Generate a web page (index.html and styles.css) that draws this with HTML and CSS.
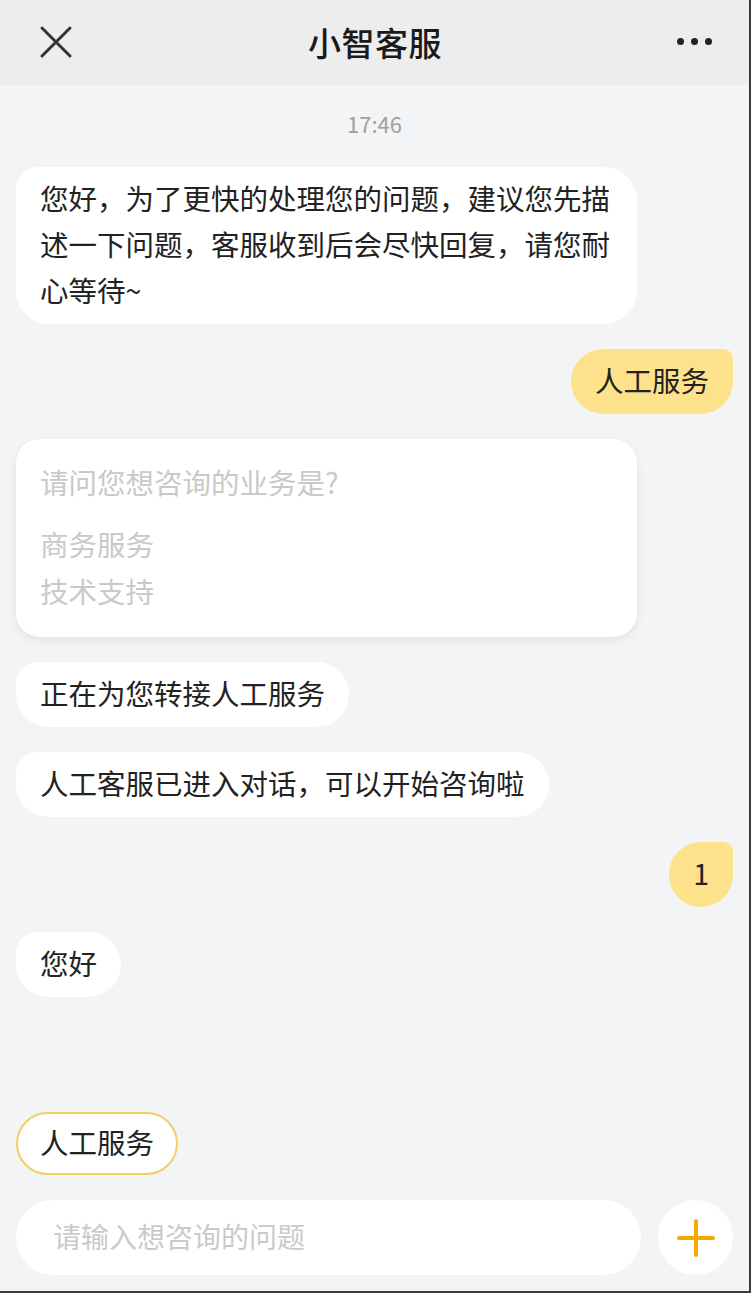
FILE: index.html
```html
<!DOCTYPE html>
<html lang="zh-CN">
<head>
  <meta charset="UTF-8" />
  <meta name="viewport" content="width=device-width, initial-scale=1.0" />
  <title>小智客服</title>
  <link rel="stylesheet" href="styles.css">
</head>
<body>

  <div class="app">
    <header class="top-bar">
      <button class="icon-btn" aria-label="关闭">
        <svg width="34" height="34" viewBox="0 0 34 34">
          <path d="M3 3 L31 31 M31 3 L3 31" stroke="#333" stroke-width="3" stroke-linecap="round" fill="none"/>
        </svg>
      </button>
      <h1>小智客服</h1>
      <button class="icon-btn more" aria-label="更多">
        <span></span><span></span><span></span>
      </button>
    </header>

    <main class="chat">
      <div class="time">17:46</div>

      <div class="msg left">您好，为了更快的处理您的问题，建议您先描述一下问题，客服收到后会尽快回复，请您耐心等待~</div>
      <div class="msg right">人工服务</div>

      <div class="menu-card">
        <div class="menu-title">请问您想咨询的业务是?</div>
        <div class="menu-item first">商务服务</div>
        <div class="menu-item">技术支持</div>
      </div>

      <div class="msg left">正在为您转接人工服务</div>
      <div class="msg left">人工客服已进入对话，可以开始咨询啦</div>
      <div class="msg right">1</div>
      <div class="msg left">您好</div>
    </main>

    <footer class="bottom">
      <button class="chip">人工服务</button>
      <div class="input-row">
        <input type="text" placeholder="请输入想咨询的问题" />
        <button class="plus" aria-label="更多功能">
          <svg width="38" height="38" viewBox="0 0 38 38">
            <path d="M19 2 V36 M2 19 H36" stroke="#f5a900" stroke-width="4" stroke-linecap="round" fill="none"/>
          </svg>
        </button>
      </div>
    </footer>
  </div>

</body>
</html>
```

FILE: styles.css
```css
* {
  box-sizing: border-box;
}

body {
  margin: 0;
  font-family: "Noto Sans CJK SC", "Noto Sans", sans-serif;
  color: #222;
  background: #f3f4f6;
}

.app {
  width: 751px;
  height: 1293px;
  display: flex;
  flex-direction: column;
  background: #f3f4f6;
  border-right: 2px solid #3a3a3a;
  border-bottom: 2px solid #3a3a3a;
  overflow: hidden;
}

.top-bar {
  height: 85px;
  flex-shrink: 0;
  background: #ededed;
  display: flex;
  align-items: center;
  justify-content: space-between;
  padding: 0 33px 2px 34px;
}

.top-bar h1 {
  margin: 0;
  font-size: 33px;
  font-weight: 500;
  color: #1a1a1a;
  letter-spacing: 0.5px;
}

.icon-btn {
  background: none;
  border: none;
  padding: 0;
  width: 44px;
  height: 44px;
  display: flex;
  align-items: center;
  justify-content: center;
}

.icon-btn.more {
  gap: 7px;
  width: 44px;
}

.icon-btn.more span {
  width: 7px;
  height: 7px;
  border-radius: 50%;
  background: #222;
}

.chat {
  flex: 1;
  display: flex;
  flex-direction: column;
  align-items: flex-start;
  gap: 25px;
  padding: 18px 16px 0 16px;
}

.time {
  align-self: center;
  font-size: 22px;
  line-height: 40px;
  color: #a0a0a0;
  margin-bottom: -1px;
}

.msg {
  max-width: 621px;
  padding: 8px 24px 11px;
  font-size: 28.5px;
  line-height: 46px;
  border-radius: 22px 33px 33px 33px;
  background: #fff;
}

.msg.right {
  align-self: flex-end;
  background: #fde28b;
  border-radius: 33px 10px 33px 33px;
}

.menu-card {
  width: 621px;
  background: #fff;
  border-radius: 24px;
  padding: 19px 24px 23px;
  box-shadow: 0 3px 8px rgba(0, 0, 0, 0.08);
  color: #c9c9c9;
  font-size: 28.5px;
  line-height: 47px;
}

.menu-item.first {
  margin-top: 15px;
}

.bottom {
  flex-shrink: 0;
  padding: 0 16px 16px 16px;
}

.chip {
  font-family: inherit;
  font-size: 28.5px;
  color: #222;
  background: #fff;
  border: 2px solid #f3cd68;
  border-radius: 32px;
  height: 63px;
  padding: 0 22px 3px;
  line-height: 56px;
}

.input-row {
  margin-top: 25px;
  display: flex;
  gap: 17px;
}

.input-row input {
  flex: 1;
  height: 75px;
  border: none;
  border-radius: 38px;
  background: #fff;
  padding: 0 37px 3px;
  font-family: inherit;
  font-size: 28px;
  outline: none;
}

.input-row input::placeholder {
  color: #cacaca;
}

.plus {
  width: 75px;
  height: 75px;
  border-radius: 50%;
  border: none;
  background: #fff;
  display: flex;
  align-items: center;
  justify-content: center;
  padding: 0;
}
```
